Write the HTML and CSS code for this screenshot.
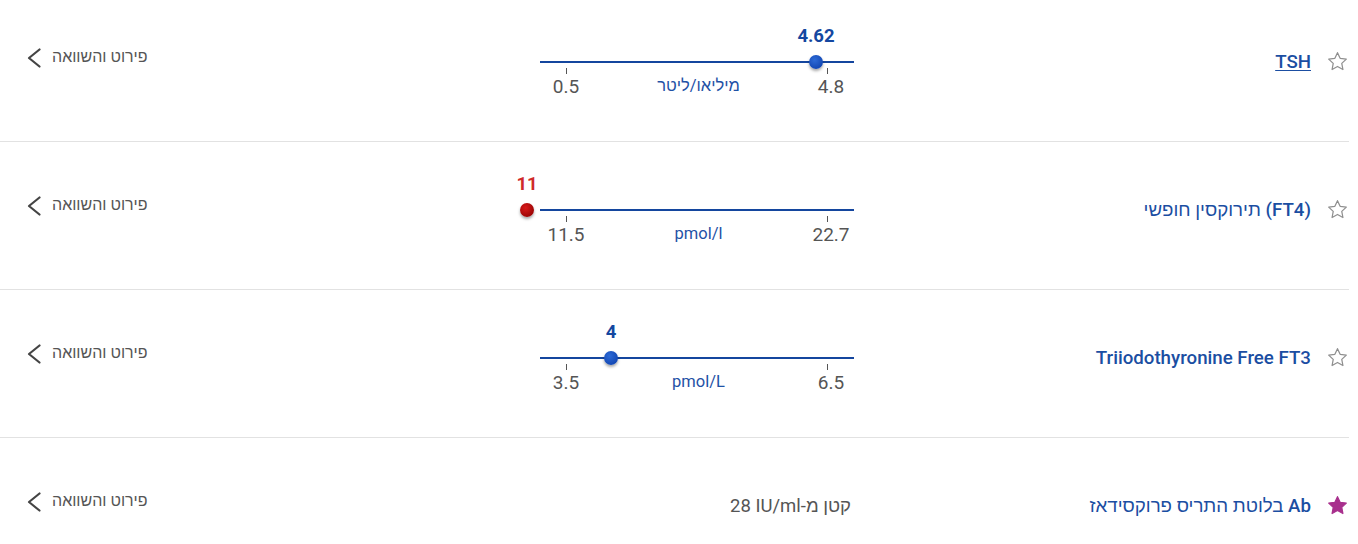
FILE: index.html
```html
<!DOCTYPE html>
<html lang="he">
<head>
<meta charset="utf-8">
<title>Results</title>
<link rel="stylesheet" href="styles.css">
</head>
<body>
<div class="list" dir="rtl">

  <div class="row">
    <div class="name-col">
      <svg class="star" viewBox="0 0 24 24"><path d="M12 2.8l2.75 5.9 6.45.8-4.75 4.45 1.2 6.4L12 17.2l-5.65 3.15 1.2-6.4L2.8 9.5l6.45-.8z"/></svg>
      <a class="name underline">TSH</a>
    </div>
    <div class="chart">
      <div class="value-row"><span class="value" style="left:276px">4.62</span></div>
      <div class="track"><span class="dot" style="left:276px"></span></div>
      <div class="ticks"><i></i><i></i></div>
      <div class="labels"><span class="lbl">0.5</span><span class="unit" dir="rtl">מיליאו/ליטר</span><span class="lbl">4.8</span></div>
    </div>
    <div class="link-col">
      <a class="link"><span>פירוט והשוואה</span><svg class="chev" viewBox="0 0 14 20"><path d="M12.5 1.5L2 10l10.5 8.5"/></svg></a>
    </div>
  </div>

  <div class="row">
    <div class="name-col">
      <svg class="star" viewBox="0 0 24 24"><path d="M12 2.8l2.75 5.9 6.45.8-4.75 4.45 1.2 6.4L12 17.2l-5.65 3.15 1.2-6.4L2.8 9.5l6.45-.8z"/></svg>
      <a class="name">(FT4) תירוקסין חופשי</a>
    </div>
    <div class="chart">
      <div class="value-row"><span class="value high" style="left:-13px">11</span></div>
      <div class="track"><span class="dot red" style="left:-13px"></span></div>
      <div class="ticks"><i></i><i></i></div>
      <div class="labels"><span class="lbl">11.5</span><span class="unit">pmol/l</span><span class="lbl">22.7</span></div>
    </div>
    <div class="link-col">
      <a class="link"><span>פירוט והשוואה</span><svg class="chev" viewBox="0 0 14 20"><path d="M12.5 1.5L2 10l10.5 8.5"/></svg></a>
    </div>
  </div>

  <div class="row">
    <div class="name-col">
      <svg class="star" viewBox="0 0 24 24"><path d="M12 2.8l2.75 5.9 6.45.8-4.75 4.45 1.2 6.4L12 17.2l-5.65 3.15 1.2-6.4L2.8 9.5l6.45-.8z"/></svg>
      <a class="name">Triiodothyronine Free FT3</a>
    </div>
    <div class="chart">
      <div class="value-row"><span class="value" style="left:71px">4</span></div>
      <div class="track"><span class="dot" style="left:71px"></span></div>
      <div class="ticks"><i></i><i></i></div>
      <div class="labels"><span class="lbl">3.5</span><span class="unit">pmol/L</span><span class="lbl">6.5</span></div>
    </div>
    <div class="link-col">
      <a class="link"><span>פירוט והשוואה</span><svg class="chev" viewBox="0 0 14 20"><path d="M12.5 1.5L2 10l10.5 8.5"/></svg></a>
    </div>
  </div>

  <div class="row">
    <div class="name-col">
      <svg class="star filled" viewBox="0 0 24 24"><path d="M12 2.8l2.75 5.9 6.45.8-4.75 4.45 1.2 6.4L12 17.2l-5.65 3.15 1.2-6.4L2.8 9.5l6.45-.8z"/></svg>
      <a class="name">Ab בלוטת התריס פרוקסידאז</a>
    </div>
    <div class="chart text-result">
      <span class="result-text">קטן מ-<bdi dir="ltr">28 IU/ml</bdi></span>
    </div>
    <div class="link-col">
      <a class="link"><span>פירוט והשוואה</span><svg class="chev" viewBox="0 0 14 20"><path d="M12.5 1.5L2 10l10.5 8.5"/></svg></a>
    </div>
  </div>

</div>
</body>
</html>
```

FILE: styles.css
```css
html, body {
  margin: 0;
  padding: 0;
  background: #fff;
}
body {
  font-family: Roboto, "Liberation Sans", sans-serif;
  overflow: hidden;
}
.list {
  width: 1349px;
  margin-top: -6px;
  direction: rtl;
}
.row {
  display: flex;
  align-items: flex-start;
  height: 147px;
  border-bottom: 1px solid #e2e2e2;
}
.name-col {
  width: 495px;
  box-sizing: border-box;
  display: flex;
  align-items: center;
  gap: 15px;
  padding-top: 56px;
  padding-right: 0;
}
.star {
  width: 23px;
  height: 23px;
  flex: none;
}
.star path {
  fill: none;
  stroke: #8f8f8f;
  stroke-width: 1.3;
  stroke-linejoin: round;
}
.star.filled path {
  fill: #a8308d;
  stroke: #a8308d;
}
.name {
  font-size: 18.7px;
  line-height: 22px;
  font-weight: 500;
  color: #1b4ea2;
  white-space: nowrap;
}
.name.underline {
  text-decoration: underline;
  text-underline-offset: 2px;
}
.chart {
  width: 314px;
  flex: none;
  direction: ltr;
  padding-top: 32px;
}
.value-row {
  position: relative;
  height: 20px;
}
.value {
  position: absolute;
  top: 0;
  transform: translateX(-50%);
  font-size: 18.5px;
  line-height: 20px;
  font-weight: 700;
  color: #1447a0;
  white-space: nowrap;
}
.value.high {
  color: #d02a2a;
}
.track {
  position: relative;
  margin-top: 15px;
  height: 2px;
  background: #14469e;
}
.dot {
  position: absolute;
  top: -6px;
  width: 14px;
  height: 14px;
  margin-left: -7px;
  border-radius: 50%;
  background: radial-gradient(circle at 40% 35%, #2d6ad6, #1449b5 70%);
  box-shadow: 0 2px 3px rgba(0, 0, 0, 0.35);
}
.dot.red {
  background: radial-gradient(circle at 40% 35%, #d81a1a, #9e0505 70%);
}
.ticks {
  display: flex;
  justify-content: space-between;
  margin-top: 5px;
  padding: 0 26px 0 26px;
  height: 6px;
}
.ticks i {
  display: block;
  width: 1px;
  height: 6px;
  background: #555;
}
.labels {
  display: flex;
  justify-content: space-between;
  align-items: center;
  margin: 2px -4px 0 -1px;
  height: 22px;
}
.lbl {
  width: 54px;
  text-align: center;
  font-size: 19px;
  line-height: 22px;
  color: #555;
}
.unit {
  font-size: 16.5px;
  line-height: 20px;
  color: #1f52a6;
  margin-top: -3px;
}
.chart.text-result {
  display: flex;
  justify-content: flex-end;
  padding-top: 56px;
  padding-right: 3px;
  box-sizing: border-box;
}
.result-text {
  direction: rtl;
  font-size: 18.5px;
  line-height: 24px;
  color: #555;
}
.link-col {
  flex: 1;
  display: flex;
  justify-content: flex-end;
  padding-top: 51px;
  padding-left: 27px;
}
.link {
  display: flex;
  align-items: center;
  gap: 11px;
  font-size: 16px;
  line-height: 20px;
  color: #555;
}
.chev {
  width: 14px;
  height: 20px;
  margin-top: 3px;
}
.chev path {
  fill: none;
  stroke: #444;
  stroke-width: 2.2;
  stroke-linecap: round;
  stroke-linejoin: round;
}
```
